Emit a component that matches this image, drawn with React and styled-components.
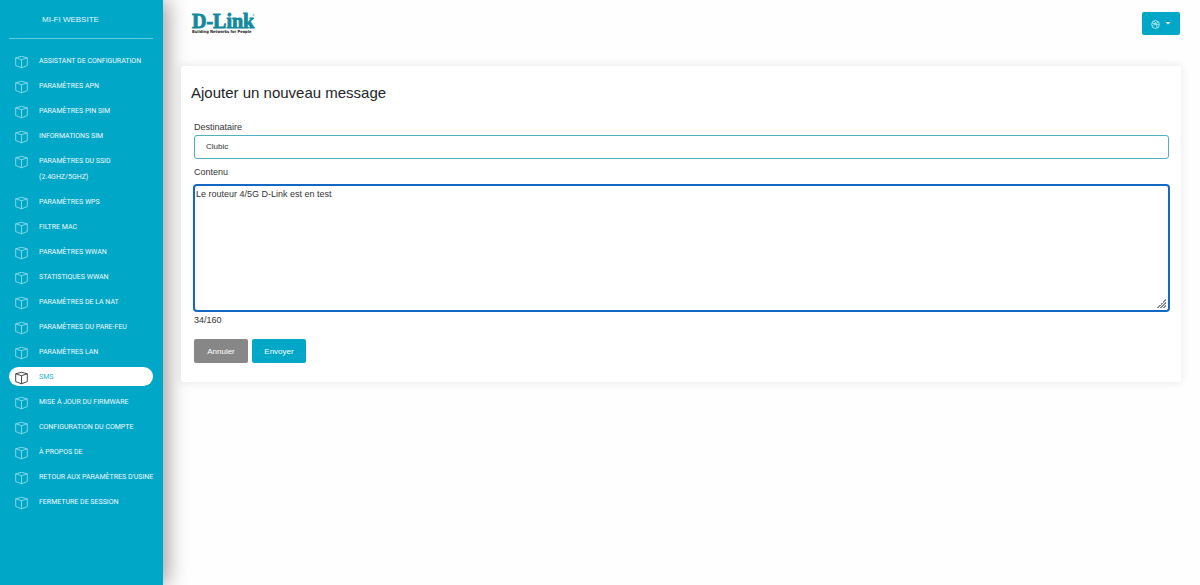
import { useEffect, useRef, useState } from 'react';
import styled, { createGlobalStyle } from 'styled-components';

const MAX_LENGTH = 160;

const GlobalStyle = createGlobalStyle`
  * {
    box-sizing: border-box;
  }
  body {
    margin: 0;
    background: #fefefe;
    color: #333;
    font-family: 'Liberation Sans', Arial, sans-serif;
    font-size: 9px;
  }
  button,
  input,
  textarea {
    font-family: inherit;
  }
`;

const Page = styled.div`
  display: flex;
  min-height: 100vh;
`;

const Sidebar = styled.nav`
  flex: 0 0 163px;
  min-width: 0;
  padding: 0 10px 0 9px;
  background: #00a7c7;
  box-shadow: 4px 0 20px rgba(0, 0, 0, 0.4);
`;

const Brand = styled.div`
  height: 39px;
  padding-left: 33px;
  border-bottom: 1px solid #66cadd;
  color: #e6f6fa;
  font-size: 8px;
  line-height: 39px;
`;

const Menu = styled.ul`
  display: flex;
  flex-direction: column;
  gap: 6px;
  margin: 0;
  padding: 12px 0 0;
  list-style: none;
`;

const MenuLink = styled.a`
  display: flex;
  align-items: flex-start;
  gap: 11px;
  padding: 2px 0 1px 6px;
  border-radius: 10px;
  background: ${(props) => (props.$active ? '#fff' : 'transparent')};
  color: ${(props) => (props.$active ? '#29b4cf' : '#effafc')};
  font-family: Roboto, 'Liberation Sans', sans-serif;
  font-size: 7px;
  line-height: 16px;
  text-decoration: none;
  text-transform: uppercase;
  white-space: pre;
`;

const BoxIcon = styled.svg`
  flex: none;
  width: 13px;
  height: 14px;
  margin-top: 2px;
  fill: none;
  stroke: ${(props) => (props.$active ? '#333' : '#8cdbea')};
  stroke-width: 0.9;
  stroke-linejoin: round;
`;

const Content = styled.div`
  flex: 1;
  min-width: 0;
  padding: 0 19px 0 18px;
`;

const Header = styled.header`
  display: flex;
  justify-content: space-between;
  align-items: flex-start;
  height: 66px;
  padding: 12px 1px 0 11px;
`;

const Logo = styled.svg`
  width: 64px;
  height: 24px;
  overflow: visible;
`;

const LanguageButton = styled.button`
  display: flex;
  align-items: center;
  justify-content: center;
  gap: 5px;
  width: 38px;
  height: 23px;
  padding: 0;
  border: 0;
  border-radius: 2px;
  background: #00a7c7;
`;

const Card = styled.main`
  padding: 17px 12px 19px 13px;
  border-radius: 2px;
  background: #fff;
  box-shadow: 0 0 10px rgba(0, 0, 0, 0.1);
`;

const Title = styled.h1`
  margin: 0 -3px 17px;
  color: #212529;
  font-size: 15px;
  font-weight: 400;
  line-height: 20px;
`;

const Form = styled.form`
  display: flex;
  flex-direction: column;
`;

const Label = styled.label`
  line-height: 14px;
`;

const RecipientInput = styled.input`
  height: 24px;
  margin: 1px 0 6px;
  padding: 0 11px 2px;
  border: 1px solid #4fb0bf;
  border-radius: 3px;
  outline: 0;
  color: #333;
  font-size: 8px;
`;

const MessageBox = styled.textarea`
  height: 128px;
  margin: 5px -1px 1px;
  padding: 2px 1px;
  border: 2px solid #1268c3;
  border-radius: 4px;
  outline: 0;
  color: #333;
  font-size: 9px;
  line-height: 12px;

  &::-webkit-resizer {
    background: linear-gradient(
        135deg,
        transparent 50%,
        #888 50% 58%,
        #fff 58% 66%,
        #888 66% 74%,
        #fff 74% 82%,
        #888 82% 90%,
        #fff 90%
      )
      4px 4px / 9px 9px no-repeat;
  }
`;

const Counter = styled.div`
  line-height: 14px;
`;

const Actions = styled.div`
  display: flex;
  gap: 4px;
  margin-top: 12px;
`;

const Button = styled.button`
  width: 54px;
  height: 24px;
  padding: 0;
  border: 0;
  border-radius: 2px;
  background: ${(props) => (props.$primary ? '#00a7c7' : '#878787')};
  color: #fff;
  font-size: 8px;
`;

const menuItems = [
  'Assistant de configuration',
  'Paramètres APN',
  'Paramètres PIN SIM',
  'Informations SIM',
  'Paramètres du SSID\n(2.4GHz/5GHz)',
  'Paramètres WPS',
  'Filtre MAC',
  'Paramètres WWAN',
  'Statistiques WWAN',
  'Paramètres de la NAT',
  'Paramètres du pare-feu',
  'Paramètres LAN',
  'SMS',
  'Mise à jour du firmware',
  'Configuration du compte',
  'À propos de',
  "Retour aux paramètres d'usine",
  'Fermeture de session',
];

const App = () => {
  const [recipient, setRecipient] = useState('Clubic');
  const [message, setMessage] = useState('Le routeur 4/5G D-Link est en test');
  const messageRef = useRef(null);

  // start with the caret after the last character
  useEffect(() => {
    const box = messageRef.current;
    box.focus();
    box.setSelectionRange(box.value.length, box.value.length);
  }, []);

  return (
    <Page>
      <GlobalStyle />
      <Sidebar>
        <Brand>MI-FI WEBSITE</Brand>
        <Menu>
          {menuItems.map((item) => (
            <li key={item}>
              <MenuLink href="#" $active={item === 'SMS'}>
                <BoxIcon viewBox="0 0 13 14" $active={item === 'SMS'}>
                  <path d="M6.500 1.300 12.300 2.800v7.800L6.500 12.800 0.700 10.600V2.800z" />
                  <path d="M0.700 2.800l5.800 1.900L12.300 2.800M6.500 4.700v8" />
                </BoxIcon>
                <span>{item}</span>
              </MenuLink>
            </li>
          ))}
        </Menu>
      </Sidebar>
      <Content>
        <Header>
          <Logo viewBox="0 0 64 24" role="img" aria-label="D-Link">
            <text
              x="0"
              y="16"
              fill="#138a9c"
              stroke="#138a9c"
              strokeWidth="0.9"
              fontFamily="Liberation Serif, serif"
              fontWeight="700"
              fontSize="20"
            >
              D-Link
            </text>
            <text
              x="0"
              y="21"
              fill="#222"
              fontFamily="DejaVu Sans Condensed, DejaVu Sans, sans-serif"
              fontWeight="700"
              fontSize="4"
            >
              Building Networks for People
            </text>
            <circle cx="61.500" cy="3" r="0.700" fill="none" stroke="#138a9c" strokeWidth="0.4" />
          </Logo>
          <LanguageButton aria-label="Langue">
            <svg width="9" height="10" viewBox="0 0 9 10" fill="none" stroke="#b5e6f0" strokeWidth="0.9">
              <circle cx="4.500" cy="5.500" r="3.900" />
              <path d="M1 4c2 1 5 1 6-1M3 2c2 2 3 4 3 7M1 7c2-2 5-2 7-1" />
            </svg>
            <svg width="6" height="5" viewBox="0 0 6 5" fill="#fff">
              <path d="M0.500 1h5L3 3.500z" />
            </svg>
          </LanguageButton>
        </Header>
        <Card>
          <Title>Ajouter un nouveau message</Title>
          <Form onSubmit={(e) => e.preventDefault()}>
            <Label htmlFor="recipient">Destinataire</Label>
            <RecipientInput
              id="recipient"
              value={recipient}
              onChange={(e) => setRecipient(e.target.value)}
            />
            <Label htmlFor="message">Contenu</Label>
            <MessageBox
              id="message"
              ref={messageRef}
              maxLength={MAX_LENGTH}
              value={message}
              onChange={(e) => setMessage(e.target.value)}
            />
            <Counter>
              {message.length}/{MAX_LENGTH}
            </Counter>
            <Actions>
              <Button type="button">Annuler</Button>
              <Button $primary>Envoyer</Button>
            </Actions>
          </Form>
        </Card>
      </Content>
    </Page>
  );
};

export default App;
